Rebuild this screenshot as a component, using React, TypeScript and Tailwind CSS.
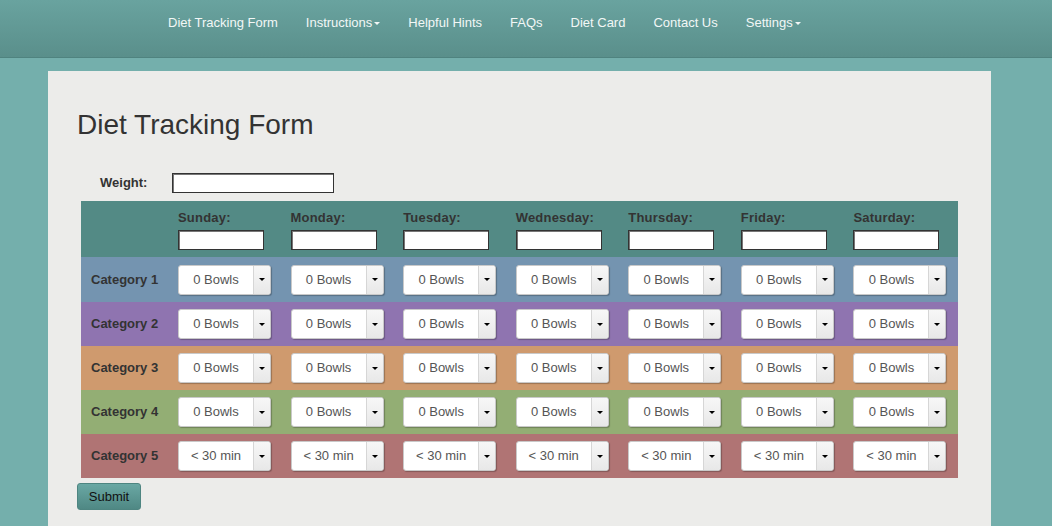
const navItems = [
  { label: "Diet Tracking Form" },
  { label: "Instructions", caret: true },
  { label: "Helpful Hints" },
  { label: "FAQs" },
  { label: "Diet Card" },
  { label: "Contact Us" },
  { label: "Settings", caret: true },
];

const days = ["Sunday", "Monday", "Tuesday", "Wednesday", "Thursday", "Friday", "Saturday"];

const categories = [
  { name: "Category 1", bg: "bg-[#7494b0]", h: "h-[45px]", value: "0 Bowls" },
  { name: "Category 2", bg: "bg-[#8f74b0]", h: "h-[44px]", value: "0 Bowls" },
  { name: "Category 3", bg: "bg-[#cf9a6e]", h: "h-[44px]", value: "0 Bowls" },
  { name: "Category 4", bg: "bg-[#93ae74]", h: "h-[44px]", value: "0 Bowls" },
  { name: "Category 5", bg: "bg-[#b07474]", h: "h-[44px]", value: "< 30 min" },
];

function Caret({ className = "" }: { className?: string }) {
  return (
    <span
      className={`inline-block h-0 w-0 border-x-[3px] border-t-[3px] border-x-transparent ${className}`}
    />
  );
}

function FakeSelect({ value }: { value: string }) {
  return (
    <div className="flex h-[30px] w-[93px] overflow-hidden rounded-[3px] border border-[#c9c9c9] bg-white shadow-[1px_1px_1px_rgba(0,0,0,0.25)]">
      <span className="flex flex-1 items-center justify-center text-[13px] text-[#555]">{value}</span>
      <span className="flex w-[17px] items-center justify-center border-l border-[#d6d6d6] bg-gradient-to-b from-[#f7f7f7] to-[#e8e8e8]">
        <Caret className="border-t-black" />
      </span>
    </div>
  );
}

export default function App() {
  return (
    <div className="min-h-[526px] bg-[#74afac] font-['Liberation_Sans',Arial,sans-serif] text-[#333]">
      <nav className="h-[58px] border-b border-[#4f837f] bg-gradient-to-b from-[#69a39f] to-[#5a8f8b]">
        <ul className="flex gap-[28px] pl-[168px] pt-[15px] text-[13px] leading-[15px] text-[#f2f7f6]">
          {navItems.map((item) => (
            <li key={item.label} className="flex items-center">
              {item.label}
              {item.caret ? <Caret className="ml-[2px] mt-[2px] border-t-[#f2f7f6]" /> : null}
            </li>
          ))}
        </ul>
      </nav>

      <main className="mx-[48px] mt-[13px] w-[943px] bg-[#ececea] pb-[20px] pl-[29px] pt-[38px]">
        <h1 className="text-[28px] leading-[32px] text-[#333]">Diet Tracking Form</h1>

        <div className="mt-[32px] flex items-center">
          <label className="w-[95px] pl-[23px] text-[13px] font-bold text-[#333]">Weight:</label>
          <input className="h-[20px] w-[162px] border border-[#333] bg-white shadow-[inset_1px_1px_0_#777]" />
        </div>

        <div className="ml-[4px] mt-[8px] grid w-[877px] grid-cols-[89px_repeat(7,1fr)]">
          <div className="bg-[#538a85]" />
          {days.map((d) => (
            <div key={d} className="flex h-[56px] flex-col bg-[#538a85] pl-[8px] pt-[9px]">
              <span className="text-[13px] font-bold leading-[15px] tracking-[0.2px] text-[#333]">{d}:</span>
              <input className="mt-[5px] h-[20px] w-[86px] border border-[#333] bg-white shadow-[inset_1px_1px_0_#777]" />
            </div>
          ))}

          {categories.map((c) => (
            <div key={c.name} className="contents">
              <div className={`${c.bg} ${c.h} flex items-center pl-[10px] text-[13px] font-bold text-[#333]`}>
                {c.name}
              </div>
              {days.map((d) => (
                <div key={d} className={`${c.bg} ${c.h} flex items-center pl-[8px]`}>
                  <FakeSelect value={c.value} />
                </div>
              ))}
            </div>
          ))}
        </div>

        <button className="mt-[5px] h-[27px] w-[64px] rounded-[3px] border border-[#4e8581] bg-gradient-to-b from-[#6aa8a4] to-[#4f8884] text-[13px] text-[#111]">
          Submit
        </button>
      </main>
    </div>
  );
}
